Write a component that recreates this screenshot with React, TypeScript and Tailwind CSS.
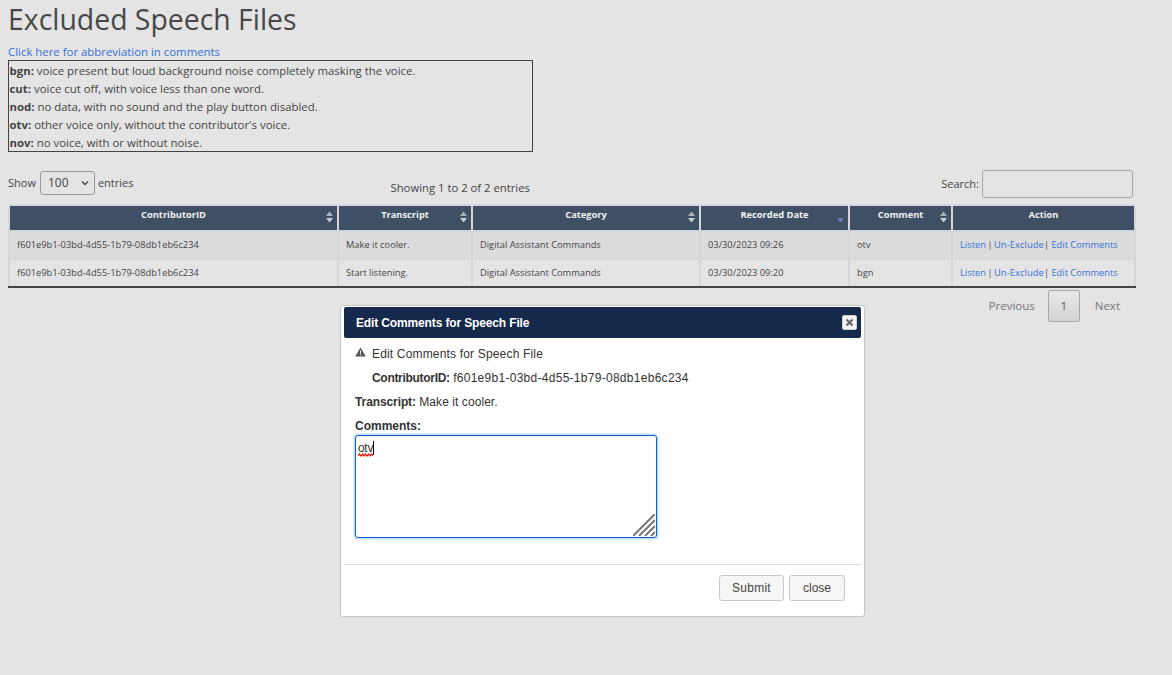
import React from "react";

const rows = [
  { id: "f601e9b1-03bd-4d55-1b79-08db1eb6c234", t: "Make it cooler.", d: "03/30/2023 09:26", c: "otv", bg: "bg-[#dcdcdc]", b: "border-b-[#d3d6da]" },
  { id: "f601e9b1-03bd-4d55-1b79-08db1eb6c234", t: "Start listening.", d: "03/30/2023 09:20", c: "bgn", bg: "bg-[#e4e4e4]", b: "border-b-[#444]" },
];

const abbr: [string, string][] = [
  ["bgn:", "voice present but loud background noise completely masking the voice."],
  ["cut:", "voice cut off, with voice less than one word."],
  ["nod:", "no data, with no sound and the play button disabled."],
  ["otv:", "other voice only, without the contributor's voice."],
  ["nov:", "no voice, with or without noise."],
];

function Sort({ active }: { active?: boolean }) {
  return (
    <svg width="7" height="12" viewBox="0 0 7 12" className="absolute right-[4px] top-[5px]">
      {active ? (
        <path d="M0 7h7L3.5 11.5z" fill="#6b7fb5" />
      ) : (
        <>
          <path d="M3.5 0.5L7 5H0z" fill="#aab2bd" />
          <path d="M0 7h7L3.5 11.5z" fill="#c6ccd3" />
        </>
      )}
    </svg>
  );
}

function Th({ w, label, sort = true, active }: { w: string; label: string; sort?: boolean; active?: boolean }) {
  return (
    <th className={`${w} relative h-[26px] border-2 border-[#d3d6da] bg-[#3f4f66] p-0 pb-[6px] text-center align-middle text-[9.3px] font-bold text-[#f2f2f2]`}>
      {label}
      {sort && <Sort active={active} />}
    </th>
  );
}

export default function App() {
  return (
    <div className="relative h-[675px] w-[1172px] overflow-hidden bg-[#e4e4e4] font-['Open_Sans','Noto_Sans',sans-serif] text-[#444]">
      <div className="pl-2">
        <h1 className="pt-[1px] text-[28.4px] leading-[36px] font-normal text-[#484848]">Excluded Speech Files</h1>
        <a className="mt-[6px] block text-[11.4px] leading-[17px] text-[#3572d4]">Click here for abbreviation in comments</a>
        <div className="h-[92px] w-[525px] border border-[#444] pt-[1px] text-[11.4px] leading-[18px]">
          {abbr.map(([k, v]) => (
            <div key={k} className="whitespace-nowrap pl-[0.5px]">
              <b className="font-bold">{k}</b> {v}
            </div>
          ))}
        </div>

        <div className="relative mt-[18px] flex h-[34px] w-[1125px] items-start">
          <div className="flex items-center gap-[4px] pt-[1px] text-[11px]">
            <span>Show</span>
            <div className="flex h-[24px] w-[55px] items-center justify-between rounded-[3px] border border-[#9a9a9a] pl-[7px] pr-[5px] text-[12px]">
              <span>100</span>
              <svg width="8" height="6" viewBox="0 0 8 6"><path d="M1 1.5l3 3 3-3" fill="none" stroke="#444" strokeWidth="1.4" /></svg>
            </div>
            <span className="-ml-px">entries</span>
          </div>
          <div className="flex-1 pl-[257px] pt-[10px] text-[11.3px]">Showing 1 to 2 of 2 entries</div>
          <div className="flex items-center gap-[3px] text-[11px]">
            <span>Search:</span>
            <div className="h-[28px] w-[151px] rounded-[3px] border border-[#a5a5a5]" />
          </div>
        </div>

        <table className="w-[1126px] table-fixed border-collapse text-[9.3px]">
          <thead>
            <tr>
              <Th w="w-[329px]" label="ContributorID" />
              <Th w="w-[134px]" label="Transcript" />
              <Th w="w-[228px]" label="Category" />
              <Th w="w-[149px]" label="Recorded Date" active />
              <Th w="w-[103px]" label="Comment" />
              <Th w="w-[183px]" label="Action" sort={false} />
            </tr>
          </thead>
          <tbody>
            {rows.map((r) => (
              <tr key={r.d} className={r.bg}>
                {[r.id, r.t, "Digital Assistant Commands", r.d, r.c].map((v, i) => (
                  <td key={i} className={`h-[28px] border-2 border-[#d3d6da] ${r.b} p-0 pl-[7px] whitespace-nowrap`}>{v}</td>
                ))}
                <td className={`border-2 border-[#d3d6da] ${r.b} p-0 pl-[7px] whitespace-nowrap text-[#3572d4]`}>
                  Listen<span className="mx-[1.5px] text-[#444]">|</span><span className="tracking-[0.1px]">Un-Exclude</span><span className="text-[#444]">|</span> Edit Comments
                </td>
              </tr>
            ))}
          </tbody>
        </table>

        <div className="mt-[2px] flex w-[1126px] items-center justify-end text-[11.5px] text-[#777]">
          <span>Previous</span>
          <span className="ml-[13px] mr-[15px] flex h-[32px] w-[32px] items-center justify-center rounded-[2px] border border-[#a8a8a8] bg-[linear-gradient(#e8e8e8,#d4d4d4)] text-[#555]">1</span>
          <span className="mr-[14px]">Next</span>
        </div>
      </div>

      {/* modal */}
      <div className="absolute left-[340px] top-[305px] h-[312px] w-[525px] rounded-[3px] border border-[#c5c5c5] bg-white px-[3px] pt-[1px] font-['Liberation_Sans',Arial,sans-serif] text-[12px] text-[#333]">
        <div className="flex h-[31px] items-center justify-between rounded-[2px] bg-[#14294b] pl-[12px] pr-[4px] text-[12px] font-bold text-white">
          <span className="tracking-[-0.14px]">Edit Comments for Speech File</span>
          <span className="flex h-[15px] w-[15px] items-center justify-center rounded-[2px] border border-[#ccc] bg-[#f4f4f4]">
            <svg width="9" height="9" viewBox="0 0 9 9"><path d="M1.5 1.5l6 6M7.5 1.5l-6 6" stroke="#666" strokeWidth="2.2" /></svg>
          </span>
        </div>
        <div className="pl-[11px]">
          <div className="relative mt-[9px] pl-[17px] leading-[14px] tracking-[0.17px]">
            <svg width="11" height="10" viewBox="0 0 11 10" className="absolute left-[0px] top-[0px]"><path d="M5.5 0.5L10.8 9.5H0.2z" fill="#555" /><path d="M5 3.5h1v3h-1zM5 7.2h1v1h-1z" fill="#fff" /></svg>
            Edit Comments for Speech File
          </div>
          <div className="mt-[10px] pl-[17px] leading-[14px]"><b className="tracking-[-0.3px]">ContributorID:</b> <span className="tracking-[0.28px]">f601e9b1-03bd-4d55-1b79-08db1eb6c234</span></div>
          <div className="mt-[10px] leading-[14px]"><b className="tracking-[-0.1px]">Transcript:</b> <span className="tracking-[0.07px]">Make it cooler.</span></div>
          <div className="mt-[10px] font-bold leading-[14px]">Comments:</div>
          <div className="relative mt-[2px] h-[103px] w-[302px] rounded-[3px] border-[1.5px] border-[#0f62c9] pl-[2px] pt-[5px] text-[12px] leading-[14px] shadow-[0_0_0_1.5px_#bcdcf8]">
            <span className="tracking-[-0.3px]">otv</span>
            <span className="inline-block h-[14px] w-px bg-black align-top" />
            <svg width="15" height="4" viewBox="0 0 15 4" className="absolute left-[1.5px] top-[16.5px]">
              <path d="M0 3l1.5-2 1.5 2 1.5-2 1.5 2 1.5-2 1.5 2 1.5-2 1.5 2 1.5-2 1.5 2" fill="none" stroke="#e00" strokeWidth="1.2" />
            </svg>
            <svg width="22" height="22" viewBox="0 0 22 22" className="absolute bottom-[1px] right-[1px]">
              <path d="M0 22L22 0M6 22L22 6M12 22L22 12M18 22L22 18" stroke="#777" strokeWidth="2" />
            </svg>
          </div>
        </div>
        <div className="mt-[26px] flex h-[52px] justify-end gap-[5px] border-t border-[#ddd] pr-[16px] pt-[10px]">
          <span className="flex h-[26px] w-[65px] items-center justify-center rounded-[3px] border border-[#c8c8c8] bg-[#f6f6f6] tracking-[0.25px] text-[#454545]">Submit</span>
          <span className="flex h-[26px] w-[56px] items-center justify-center rounded-[3px] border border-[#c8c8c8] bg-[#f6f6f6] text-[#454545]">close</span>
        </div>
      </div>
    </div>
  );
}
